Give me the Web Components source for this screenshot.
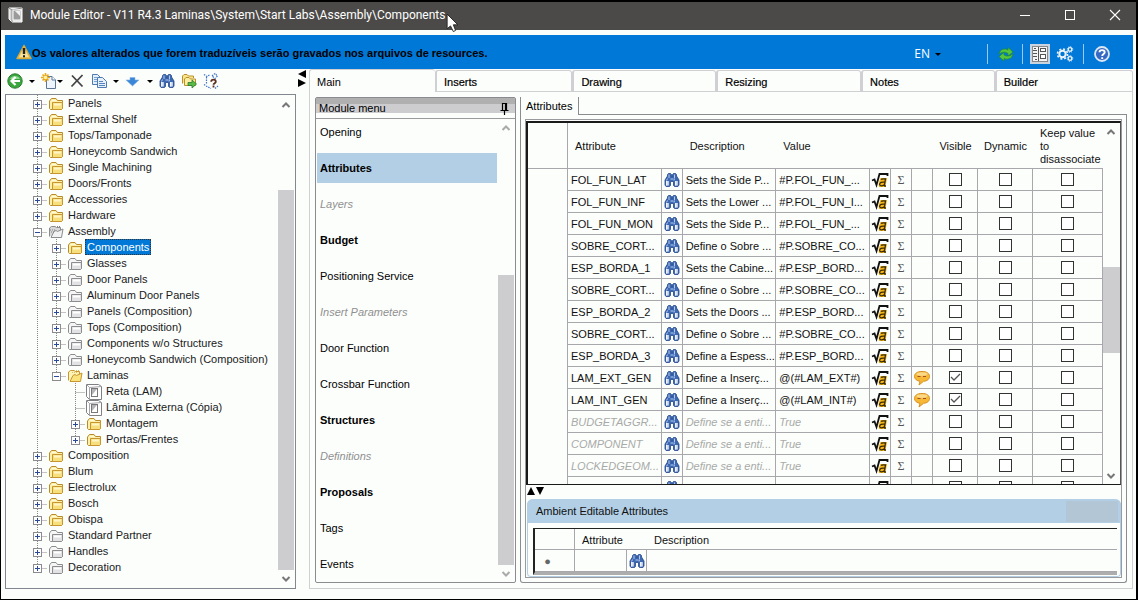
<!DOCTYPE html>
<html lang="en">
<head>
<meta charset="utf-8">
<title>Module Editor</title>
<style>
html, body { margin: 0; height: 100%; }
body { font: 11px/16px "Liberation Sans", Arial, sans-serif; color: #1a1a22; background: #fcfefc; }
</style>
</head>
<body>
<module-editor></module-editor>
<script>
const ICONS = {
  app: `<path d="M1 1H14V15H4L1 12Z" fill="#d8d8d8" stroke="#fff"/><path d="M1 1L4 3V15M4 3L14 1" fill="none" stroke="#8a8a8a"/><rect x="5" y="3" width="8" height="10" fill="#9a9a9a" stroke="#fff"/><path d="M7 4h5v5z" fill="#eee"/>`,
  min: `<path d="M3 8.500H13" stroke="#fff" fill="none"/>`,
  max: `<rect x="3.500" y="3.500" width="9" height="9" fill="none" stroke="#fff"/>`,
  close: `<path d="M3 3L13 13M13 3L3 13" stroke="#fff" stroke-width="1.100" fill="none"/>`,
  warn: `<path d="M8 1.500L15 14.500H1Z" fill="#f7cf5a" stroke="#d9a93a" stroke-linejoin="round" stroke-width="1.500"/><path d="M8 4L12.500 13H3.500Z" fill="#f4e2a0"/><path d="M8 4v6" stroke="#222" stroke-width="2.400"/><path d="M8 11.200v2" stroke="#222" stroke-width="2"/>`,
  caret: `<path d="M5 7h6l-3 3z" fill="#000"/>`,
  refresh: `<path d="M1 8C2 3 7 2 10 4L10 1.500L15 6L10 10V7.500C7 5.500 4 6 1 8Z" fill="#58c63c" stroke="#1f8a2a" stroke-width=".7"/><path d="M15 8C14 13 9 14 6 12.500V15L1 10.500L6 6.500V9C9 11 12 10 15 8Z" fill="#58c63c" stroke="#1f8a2a" stroke-width=".7"/>`,
  form: `<rect x=".5" y=".5" width="15" height="15" fill="#f4f4f4" stroke="#888"/><path d="M6.500 1V15M1 4.500h4M1 7.500h4M1 10.500h4M3 13.500h2M2 2.500h2" stroke="#555" fill="none"/><rect x="8.500" y="2.500" width="5" height="3" fill="#fff" stroke="#555"/><rect x="8.500" y="8.500" width="5" height="4" fill="#fff" stroke="#555"/>`,
  gears: `<circle cx="5.500" cy="8" r="3.200" fill="none" stroke="#eef4fb" stroke-width="2"/><circle cx="5.500" cy="8" r="5" fill="none" stroke="#eef4fb" stroke-width="1.600" stroke-dasharray="2 1.930"/><circle cx="13" cy="3.500" r="1.800" fill="none" stroke="#eef4fb" stroke-width="1.300"/><circle cx="13" cy="3.500" r="2.800" fill="none" stroke="#eef4fb" stroke-dasharray="1.100 1.100"/><circle cx="13" cy="12.500" r="1.800" fill="none" stroke="#eef4fb" stroke-width="1.300"/><circle cx="13" cy="12.500" r="2.800" fill="none" stroke="#eef4fb" stroke-dasharray="1.100 1.100"/>`,
  help: `<circle cx="8" cy="8" r="7" fill="#3569c4" stroke="#dbe6f5" stroke-width="1.800"/><path d="M5.500 6.300C5.500 3.400 10.700 3.400 10.700 6.200C10.700 8 8.200 7.900 8.200 10M8.200 11.200V13" stroke="#fff" stroke-width="1.900" fill="none"/>`,
  back: `<circle cx="8" cy="8" r="7.200" fill="#3aa83f" stroke="#2b7d31"/><path d="M3 6a5.500 5 0 0 1 10 0z" fill="#8fd890"/><path d="M13 8H5M8.500 4L4.500 8L8.500 12" stroke="#fff" stroke-width="2.200" fill="none"/>`,
  fresh: `<path d="M5.500 3.500H11L14.500 7V15.500H5.500Z" fill="#eef5fc" stroke="#5a7896"/><path d="M11 3.500V7H14.500" fill="#fff" stroke="#5a7896"/><path d="M4.500 0V9M0 4.500H9M1.500 1.500L7.500 7.500M7.500 1.500L1.500 7.500" stroke="#e8a81c" stroke-width="1.600"/><circle cx="4.500" cy="4.500" r="1.800" fill="#fff2a0"/>`,
  del: `<path d="M3 2.500L13.500 13.500M13.500 2L2.500 13.500" stroke="#444" stroke-width="1.800" fill="none"/>`,
  copy: `<path d="M1.500 1.500H6.500L9.500 4.500V11.500H1.500Z" fill="#e6f0fb" stroke="#4d7ab0"/><path d="M3 4.500h3M3 6.500h3M3 8.500h3" stroke="#7da3cf"/><path d="M6.500 4.500H11.500L15.500 8.500V14.500H6.500Z" fill="#e6f0fb" stroke="#4d7ab0"/><path d="M8 8.500h4M8 10.500h6M8 12.500h6" stroke="#5686c0"/>`,
  down: `<path d="M5 4.500h5V7h4L7.500 13L1 7h4z" fill="#3a86d8" stroke="#8db5de" stroke-width=".6"/>`,
  bino: `<path d="M3.500 4V2.500L4.500 1.500H6.500L7.500 2.500V5H8.500V2.500L9.500 1.500H11.500L12.500 2.500V4L15 8V13L14 14.500H10.500L9.500 13.500V9.500H6.500V13.500L5.500 14.500H2L1 13V8Z" fill="#3d68b2" stroke="#24468c" stroke-width=".8"/><path d="M2 9h3v4.500h-3zM11 9h3v4.500h-3z" fill="#b9c9e4"/><path d="M2 9h1.500v4.500h-1.500zM11 9h1.500v4.500h-1.500z" fill="#eef3fb"/><path d="M5 2.500v3.500M10.500 2.500v3.500M3.500 6.500l-1 2M10.500 6.500l-.5 2M6.500 7h3" stroke="#b4cbf0" fill="none"/>`,
  foldergo: `<path d="M1.500 10.500V3L3 1.500H6L7.500 3H12.500V5" fill="#f9e48c" stroke="#b8912c"/><path d="M3.500 12.500V6L5 4.500H8L9.500 6H14.500V12.500Z" fill="#fbeea2" stroke="#b8912c"/><path d="M7 9.500H11V7L15.500 11L11 15V12.500H7Z" fill="#58bb48" stroke="#2d7a2f" stroke-width=".8"/>`,
  struct: `<path d="M1 1.500L4 3.500L7 1.500M3.500 4v7M1 11.500L4 13.500L8 15.500M9 3L12 .5L14.500 3L12 5.500L9 3M12 15.500L15 13" stroke="#3f74c8" stroke-dasharray="1.500 1" stroke-width="1.200" fill="none"/><path d="M8.200 8.800c0-2.800 4.600-2.800 4.600 0c0 1.500-2.300 1.500-2.300 3M10.500 12.600v1.800" stroke="#5b3020" stroke-width="1.800" fill="none"/>`,
  folder: `<path d="M1.500 12.500V5L3.500 2.500H8L9.500 4.500H14.500V12.500L13.500 13.500H2.500Z" fill="#fdf0a8" stroke="#b98a2b"/><path d="M3.500 4.500h5" stroke="#fff8d8"/><path d="M4.500 13.500V6.500H14.500V12.500L13.500 13.500Z" fill="#f8df7e" stroke="#c8962e"/><path d="M6 8.500h7" stroke="#fff6c8" stroke-width="2"/>`,
  gfolder: `<path d="M1.500 12.500V5L3.500 2.500H8L9.500 4.500H14.500V12.500L13.500 13.500H2.500Z" fill="#f6f6f6" stroke="#8c8c90"/><path d="M4.500 13.500V6.500H14.500V12.500L13.500 13.500Z" fill="#e2e2e4" stroke="#8c8c90"/><path d="M6 8.500h7" stroke="#fff" stroke-width="2"/>`,
  open: `<path d="M1.500 12.500V4L3.500 2.500H7L8.500 3.500H12.500V7" fill="#fdf2b8" stroke="#c8962e"/><path d="M3 13.500L6 7.500L8 6.500L9.500 7.500L15 5L13.500 13.500Z" fill="#fae27c" stroke="#c8962e"/><path d="M5 4.500h5M9 2.500h3" stroke="#ddc060" stroke-dasharray="1 1"/>`,
  gopen: `<path d="M1.500 12.500V4L3.500 2.500H7L8.500 3.500H12.500V7" fill="#d8d8d8" stroke="#8c8c90"/><path d="M3 13.500L6 7.500L8 6.500L9.500 7.500L15 5L13.500 13.500Z" fill="#f2f2f2" stroke="#8c8c90"/><path d="M2 6h5M3 8h3M9 2.500h3" stroke="#808080" stroke-dasharray="1 1"/>`,
  module: `<path d="M.5 .5H12.500L15.500 2.500V15.500H3.500L.5 12.500Z" fill="#fff" stroke="#808084"/><path d="M.5 .5L3.500 3.500V15.500M3.500 3.500L15.500 2.500" fill="none" stroke="#a5a5a8"/><rect x="5.500" y="4.500" width="6" height="8" fill="#fff" stroke="#77777a"/><path d="M6 5h5L6 11z" fill="#b5b5b8"/>`,
  formula: `<path d="M0 8.500L2.500 7.500L4.500 13L7.500 2H15.500V4" fill="none" stroke="#111" stroke-width="1.800"/><path d="M8.500 6H15L13.500 15H7Q6 12 7 10Z" fill="#f2b619"/><path d="M9 7.500Q10 6.500 13.500 7L12.200 14M12.800 10.200Q8 9.500 7.600 12.500Q8 15 12.500 12.800M12.200 14H14" fill="none" stroke="#3a2b08" stroke-width="1.300"/>`,
  talk: `<path d="M8 1.500C3 1.500 .5 3.500 .5 6.500C.5 9 3 11 6 11.300L5 15L9.500 11.300C13.500 11 15.500 9 15.500 6.500C15.500 3.500 13 1.500 8 1.500Z" fill="#f7b935" stroke="#d98e1f"/><ellipse cx="8" cy="4" rx="5.500" ry="1.800" fill="#fbd98a"/><path d="M3.500 6.500h3M9 6.500h3" stroke="#a05028" stroke-width="1.200"/>`,
  pin: `<path d="M6.500 10V3.500H10.500V10M4.500 10.500H12.500M8.500 11V15M9.500 4v6" fill="none" stroke="#000" stroke-width="1.200"/>`,
  up: `<path d="M4.500 10L8 6.500L11.500 10" fill="none" stroke="currentColor" stroke-width="2"/>`,
  dn: `<path d="M4.500 6L8 9.500L11.500 6" fill="none" stroke="currentColor" stroke-width="2"/>`,
  left: `<path d="M12 4V12L4 8Z" fill="#000"/>`,
  right: `<path d="M4 4V12L12 8Z" fill="#000"/>`,
  triup: `<path d="M4 12H12L8 4Z" fill="#000"/>`,
  tridn: `<path d="M4 4H12L8 12Z" fill="#000"/>`,
  pointer: `<path d="M1 1V14L4 11.500L6.500 16.500L8.500 15.500L6.500 10.500H10.500Z" fill="#fff" stroke="#222" stroke-width=".8"/>`
};

function define(name, css, markup) {
  customElements.define(name, class extends HTMLElement {
    connectedCallback() {
      if (this.shadowRoot) return;
      const template = document.createElement('template');
      template.innerHTML = `<style>*{box-sizing:border-box}button{font:inherit;color:inherit;background:none;border:0;padding:0;margin:0}${css}</style>` +
        (typeof markup === 'function' ? markup(this) : markup);
      this.attachShadow({ mode: 'open' }).append(template.content.cloneNode(true));
    }
  });
}

define('ui-icon', `:host{display:block;flex:none;width:16px;height:16px}svg{display:block;width:100%;height:100%;overflow:visible}`,
  el => `<svg viewBox="0 0 16 16" aria-hidden="true">${ICONS[el.getAttribute('name')]}</svg>`);

define('scroll-bar', `
  :host{display:flex;flex-direction:column;flex:none;width:16px;color:#777}
  button{height:17px;flex:none}
  .track{flex:1;display:flex;flex-direction:column}
  .thumb{background:#cdcdcf}`,
  el => {
    const [a, b, c] = el.getAttribute('range').split(' ');
    return `<button aria-label="Scroll up"><ui-icon name="up"></ui-icon></button>
    <div class="track"><div style="flex:${a} 1 0"></div><div class="thumb" style="flex:${b} 1 0"></div><div style="flex:${c} 1 0"></div></div>
    <button aria-label="Scroll down"><ui-icon name="dn"></ui-icon></button>`;
  });

define('title-bar', `
  :host{display:flex;align-items:center;height:28px;flex:none;background:#4c4a48;color:#fff;font:12px/16px Roboto,"Segoe UI",sans-serif;padding:0 13px 2px 7px;position:relative}
  span{margin-left:6px;flex:1}
  button{margin-left:29px}
  .pointer{position:absolute;left:445px;top:11px;width:18px;height:18px}`,
  `<ui-icon name="app"></ui-icon><span><slot></slot></span>
   <button aria-label="Minimize"><ui-icon name="min"></ui-icon></button>
   <button aria-label="Maximize"><ui-icon name="max"></ui-icon></button>
   <button aria-label="Close"><ui-icon name="close"></ui-icon></button>
   <ui-icon class="pointer" name="pointer"></ui-icon>`);

define('notice-bar', `
  :host{display:flex;align-items:center;height:34px;flex:none;margin:5px 3px 0 4px;padding:0 23px 0 11px;background:#0078d7;color:#000}
  strong{flex:1;font-size:11px;padding-top:1px}
  .tools{display:flex;align-items:center;padding-top:4px}
  .lang{display:flex;align-items:center;color:#fff;font:12px/16px "Open Sans",sans-serif;margin-right:41px}
  i{width:1px;height:20px;background:#9cc8f0}
  .on{background:#c8d4e0;padding:2px;margin:0 7px}
  .g{margin:0 10px 0 0}
  .r{margin:0 8px 0 10px}.h{margin-left:10px}`,
  `<ui-icon name="warn"></ui-icon><strong><slot></slot></strong>
   <div class="tools"><button class="lang">EN<ui-icon name="caret"></ui-icon></button><i></i>
   <button class="r" aria-label="Refresh"><ui-icon name="refresh"></ui-icon></button><i></i>
   <button class="on" aria-label="Form view"><ui-icon name="form"></ui-icon></button>
   <button class="g" aria-label="Settings"><ui-icon name="gears"></ui-icon></button><i></i>
   <button class="h" aria-label="Help"><ui-icon name="help"></ui-icon></button></div>`);

define('tool-bar', `
  :host{display:flex;align-items:center;gap:6px;height:25px;flex:none;padding:0 0 2px 2px;box-sizing:border-box}
  .pair{display:flex}
  .c{width:6px;height:16px;overflow:hidden}
  .c ui-icon{margin-left:-5px}`,
  () => {
    const b = (n, l) => `<button aria-label="${l}"><ui-icon name="${n}"></ui-icon></button>`;
    const c = `<button class="c" aria-label="More"><ui-icon name="caret"></ui-icon></button>`;
    return b('back', 'Back') + c + `<div class="pair">${b('fresh', 'New')}${c}</div>` + b('del', 'Delete') + b('copy', 'Copy') + c +
      b('down', 'Move down') + c + b('bino', 'Find') + b('foldergo', 'Move to folder') + b('struct', 'Structure');
  });

// level, icon, label, expander state, last among siblings, selected
const TREE = [
  [0, 'folder', 'Panels', '+'], [0, 'folder', 'External Shelf', '+'], [0, 'folder', 'Tops/Tamponade', '+'],
  [0, 'folder', 'Honeycomb Sandwich', '+'], [0, 'folder', 'Single Machining', '+'], [0, 'folder', 'Doors/Fronts', '+'],
  [0, 'folder', 'Accessories', '+'], [0, 'folder', 'Hardware', '+'], [0, 'gopen', 'Assembly', '-'],
  [1, 'folder', 'Components', '+', 0, 1], [1, 'gfolder', 'Glasses', '+'], [1, 'gfolder', 'Door Panels', '+'],
  [1, 'gfolder', 'Aluminum Door Panels', '+'], [1, 'gfolder', 'Panels (Composition)', '+'], [1, 'gfolder', 'Tops (Composition)', '+'],
  [1, 'gfolder', 'Components w/o Structures', '+'], [1, 'gfolder', 'Honeycomb Sandwich (Composition)', '+'],
  [1, 'open', 'Laminas', '-', 1], [2, 'module', 'Reta (LAM)', ''], [2, 'module', 'Lâmina Externa (Cópia)', ''],
  [2, 'folder', 'Montagem', '+'], [2, 'folder', 'Portas/Frentes', '+', 1],
  [0, 'folder', 'Composition', '+'], [0, 'folder', 'Blum', '+'], [0, 'folder', 'Electrolux', '+'], [0, 'folder', 'Bosch', '+'],
  [0, 'folder', 'Obispa', '+'], [0, 'gfolder', 'Standard Partner', '+'], [0, 'gfolder', 'Handles', '+'], [0, 'gfolder', 'Decoration', '+', 1]
];

define('tree-view', `
  :host{display:flex;flex:1;min-height:0;border:1px solid #828790}
  ul{flex:1;min-width:0;overflow:hidden;list-style:none;margin:0;padding:0 0 0 22px}
  li{display:flex;height:16px;white-space:nowrap}
  svg{width:19px;height:16px;flex:none}
  ui-icon{margin:1px 2px 0 1px}
  span{padding:0 2px}
  .sel{background:#0078d7;color:#fff;outline:1px dotted #333;outline-offset:-1px}
  scroll-bar{margin-right:1px;padding:1px 0}`,
  () => {
    const dot = 'stroke="#888" stroke-dasharray="1 1" fill="none"';
    const cell = (d, box = '') => `<svg viewBox="0 0 19 16" aria-hidden="true"><path d="${d}" ${dot}/>${box}</svg>`;
    return '<ul>' + TREE.map(([lv, icon, label, ex, last, sel]) => {
      let h = '';
      for (let i = 0; i < lv; i++) h += cell(i === 0 ? 'M9.500 0V16' : '');
      const box = ex ? `<rect x="5.500" y="5.500" width="8" height="8" fill="#fff" stroke="#8c8c90"/><path d="M7 9.500h5${ex === '+' ? 'M9.500 7v5' : ''}" stroke="#2a4a9a" fill="none"/>` : '';
      h += cell(`M9.500 0V${last ? 9 : 16}M9.500 9.500H19`, box);
      return `<li>${h}<ui-icon name="${icon}"></ui-icon><span class="${sel ? 'sel' : ''}">${label}</span></li>`;
    }).join('') + '</ul><scroll-bar range="77 382 0"></scroll-bar>';
  });

define('tab-strip', `
  :host{display:flex;height:23px;flex:none;color:#000}
  button{text-align:left;padding:2px 0 0 7px;border:1px solid #cfcfd4;border-left-width:2px;border-radius:3px 3px 0 0;height:22px;margin-top:1px;-webkit-text-stroke:.2px}
  button[aria-selected=true]{border-bottom:0;border-right:0;border-left-width:1px;height:23px;margin-top:0;padding-top:1px;-webkit-text-stroke:0}`,
  () => [['Main', 127], ['Inserts', 137], ['Drawing', 144], ['Resizing', 145], ['Notes', 133], ['Builder', 138]]
    .map(([t, w], i) => `<button role="tab" aria-selected="${!i}" style="flex:${w} 1 0">${t}</button>`).join(''));

define('module-menu', `
  :host{display:flex;flex-direction:column;width:201px;flex:none;border:1px solid #8c8c90;border-radius:2px}
  header{display:flex;justify-content:space-between;align-items:center;height:21px;flex:none;padding:0 3px;border-bottom:1px solid #9a9a9e;
    background:linear-gradient(#b0b0b0 0 6px,#cdcdd0 6px 15px,#fcfefc 15px);color:#000}
  .body{display:flex;flex:1;min-height:0;justify-content:space-between}
  nav{display:flex;flex-direction:column;gap:6px;width:180px;margin-left:1px;overflow:hidden;margin-top:-2px}
  a{display:block;flex:none;height:30px;line-height:30px;padding-left:3px;color:#000;text-decoration:none}
  .b{font-weight:bold}.i{font-style:italic;color:#909090}
  .on{background:#b2cfe6}
  scroll-bar{color:#aaa;margin-right:1px}`,
  () => '<header><span>Module menu</span><ui-icon name="pin"></ui-icon></header><div class="body"><nav>' +
    [['Opening', ''], ['Attributes', 'b on'], ['Layers', 'i'], ['Budget', 'b'], ['Positioning Service', ''], ['Insert Parameters', 'i'],
     ['Door Function', ''], ['Crossbar Function', ''], ['Structures', 'b'], ['Definitions', 'i'], ['Proposals', 'b'], ['Tags', ''], ['Events', '']]
      .map(([t, c]) => `<a href="#" class="${c}">${t}</a>`).join('') +
    '</nav><scroll-bar range="139 290 0"></scroll-bar></div>');

const ROWS = [
  ['FOL_FUN_LAT', 'Sets the Side P...', '#P.FOL_FUN_...'],
  ['FOL_FUN_INF', 'Sets the Lower ...', '#P.FOL_FUN_I...'],
  ['FOL_FUN_MON', 'Sets the Side P...', '#P.FOL_FUN_...'],
  ['SOBRE_CORT...', 'Define o Sobre ...', '#P.SOBRE_CO...'],
  ['ESP_BORDA_1', 'Sets the Cabine...', '#P.ESP_BORD...'],
  ['SOBRE_CORT...', 'Define o Sobre ...', '#P.SOBRE_CO...'],
  ['ESP_BORDA_2', 'Sets the Doors ...', '#P.ESP_BORD...'],
  ['SOBRE_CORT...', 'Define o Sobre ...', '#P.SOBRE_CO...'],
  ['ESP_BORDA_3', 'Define a Espess...', '#P.ESP_BORD...'],
  ['LAM_EXT_GEN', 'Define a Inserç...', '@(#LAM_EXT#)', 1],
  ['LAM_INT_GEN', 'Define a Inserç...', '@(#LAM_INT#)', 1],
  ['BUDGETAGGR...', 'Define se a enti...', 'True', 0, 1],
  ['COMPONENT', 'Define se a enti...', 'True', 0, 1],
  ['LOCKEDGEOM...', 'Define se a enti...', 'True', 0, 1],
  ['NORRISPALETTE', 'Define se a enti...', 'True', 0, 1]
];

const TABLE_CSS = `
  table{border-collapse:separate;border-spacing:0;table-layout:fixed;width:100%}
  th{font-weight:normal;text-align:left;padding:2px 0 0 7px;border-bottom:1px solid #a8a8ac;line-height:13px;white-space:nowrap}
  td{height:22px;padding:0 0 0 3px;border-right:1px solid #a8a8ac;border-bottom:1px solid #a8a8ac;white-space:nowrap;overflow:hidden}
  td ui-icon{margin-left:-1px}
  td.ctl,th.ctl{text-align:center;padding-left:0}
  th.h,td.h{border-right:1px solid #a8a8ac}`;

define('attribute-grid', TABLE_CSS + `
  :host{display:flex;min-height:0;border:2px solid #1a1a1a;border-right:1px solid #555;border-bottom-width:1px;color:#111}
  .view{flex:1;min-width:0;overflow:hidden}
  thead th{height:46px}
  td.h{border-bottom:0}
  .dim{font-style:italic;color:#a8aaa8}
  .sig{text-align:center;padding:0;font:12px/16px "Liberation Serif",serif;color:#555}
  .ck{display:grid;width:13px;height:13px;margin:0 auto}
  input{grid-area:1/1;appearance:none;display:block;width:13px;height:13px;margin:0;border:1px solid #333;background:#fff}
  .ck svg{grid-area:1/1}
  scroll-bar{width:17px;color:#777}`,
  () => {
    const box = (n, on) => `<td class="ctl"><div class="ck"><input type="checkbox" aria-label="${n}"${on ? ' checked' : ''}>${on ? '<svg width="13" height="13" viewBox="0 0 13 13"><path d="M2 6L5 9L11 3" fill="none" stroke="#555" stroke-width="1.300"/></svg>' : ''}</div></td>`;
    return `<div class="view"><table><colgroup><col style="width:40px"><col><col style="width:21px"><col><col><col style="width:21px"><col style="width:21px"><col style="width:21px"><col style="width:45px"><col style="width:55px"><col style="width:70px"></colgroup>
    <thead><tr><th class="h"></th><th>Attribute</th><th></th><th>Description</th><th>Value</th><th></th><th></th><th></th><th class="ctl">Visible</th><th class="ctl">Dynamic</th><th>Keep value<br>to<br>disassociate</th></tr></thead><tbody>` +
      ROWS.map(([a, d, v, on, dim]) => { const c = dim ? ' class="dim"' : '';
        return `<tr><td class="h"></td><td${c}>${a}</td><td><ui-icon name="bino"></ui-icon></td><td${c}>${d}</td><td${c}>${v}</td><td><ui-icon name="formula"></ui-icon></td><td class="sig">Σ</td><td>${on ? '<ui-icon name="talk"></ui-icon>' : ''}</td>${box('Visible', on)}${box('Dynamic')}${box('Keep value to disassociate')}</tr>`;
      }).join('') + '</tbody></table></div><scroll-bar range="127 87 114"></scroll-bar>';
  });

define('ambient-panel', TABLE_CSS + `
  :host{display:block;border:1px solid #b2cfe6;border-top:0;border-radius:6px 6px 4px 4px;margin-left:1px;color:#111}
  h2{font-size:11px;font-weight:normal;line-height:24px;margin:0 -1px;padding-left:9px;border-radius:6px 6px 0 0;
    background:linear-gradient(#b2c6d6,#b2c6d6) right 3px top 2px/52px 21px no-repeat #b2cfe6}
  .grid{margin:5px 3px 1px 5px;border-top:1px solid #222;border-left:2px solid #222;border-bottom:3px solid #adadad}
  th{height:21px;padding-top:3px}
  td:last-child{border-right:0}
  td.h{text-align:center;padding:0 14px 0 0;color:#666}`,
  `<h2>Ambient Editable Attributes</h2><div class="grid"><table><colgroup><col style="width:40px"><col style="width:52px"><col style="width:20px"><col></colgroup>
  <thead><tr><th class="h"></th><th>Attribute</th><th></th><th>Description</th></tr></thead>
  <tbody><tr><td class="h">●</td><td></td><td><ui-icon name="bino"></ui-icon></td><td></td></tr></tbody></table></div>`);

define('attributes-page', `
  :host{display:flex;flex-direction:column;flex:1;min-width:0;min-height:0}
  .tab{display:flex;height:18px;flex:none;border-left:1px solid #8c8c90;color:#000}
  .tab button{width:58px;border-right:1px solid #8c8c90;text-align:left;padding-left:5px}
  .tab i{flex:1;border-bottom:1px solid #8c8c90}
  .page{flex:1;display:flex;min-height:0;border:1px solid #8c8c90;border-top:0;padding:4px;border-radius:0 0 3px 3px}
  .inner{flex:1;min-width:0;display:flex;flex-direction:column;border:1px solid #9a9a9e;padding:1px 0 0}
  attribute-grid{flex:1}
  .split{display:flex;height:14px;flex:none}
  .split ui-icon{margin:-2px -4px 0 -3px}`,
  `<div class="tab"><button role="tab" aria-selected="true">Attributes</button><i></i></div>
   <div class="page"><div class="inner"><attribute-grid></attribute-grid>
   <div class="split"><ui-icon name="triup"></ui-icon><ui-icon name="tridn"></ui-icon></div>
   <ambient-panel></ambient-panel></div></div>`);

define('module-editor', `
  :host{display:flex;flex-direction:column;height:100vh;box-sizing:border-box;border:solid #000;border-width:2px 2px 1px 1px}
  main{flex:1;min-height:0;display:grid;grid-template-columns:291px 13px minmax(0,1fr);margin:0 3px 10px 4px}
  .side,.tabs{display:flex;flex-direction:column;min-height:0}
  .split{display:flex;flex-direction:column}
  .split ui-icon{margin:-3px 0 -4px -2px}
  .page{flex:1;min-height:0;display:flex;gap:4px;padding:5px;border:1px solid #cfcfd4;border-top:0}`,
  `<title-bar>Module Editor - V11 R4.3 Laminas\\System\\Start Labs\\Assembly\\Components</title-bar>
   <notice-bar>Os valores alterados que forem traduzíveis serão gravados nos arquivos de resources.</notice-bar>
   <main><div class="side"><tool-bar></tool-bar><tree-view></tree-view></div>
   <div class="split"><ui-icon name="left"></ui-icon><ui-icon name="right"></ui-icon></div>
   <div class="tabs"><tab-strip></tab-strip><div class="page"><module-menu></module-menu><attributes-page></attributes-page></div></div></main>`);
</script>
</body>
</html>
